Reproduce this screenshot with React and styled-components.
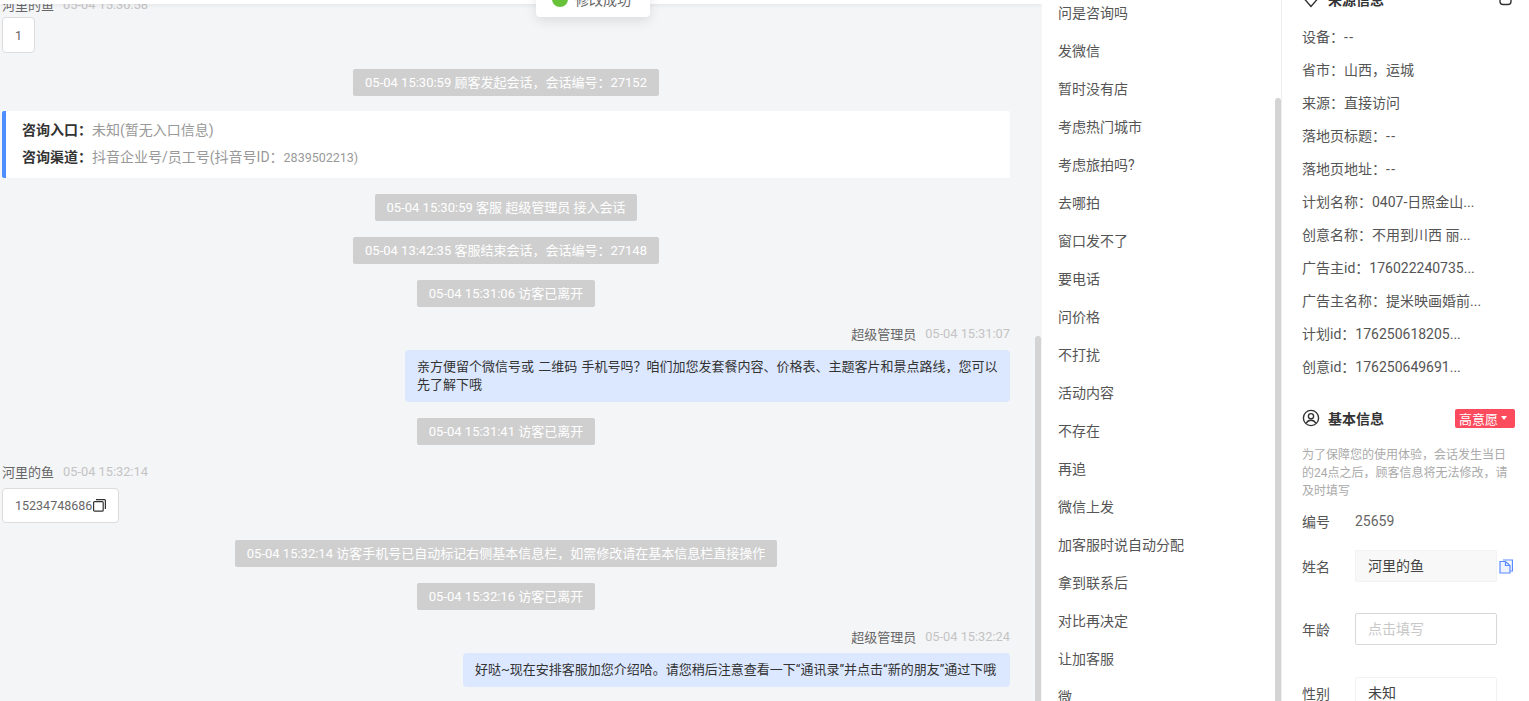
import React from 'react'
import styled, { createGlobalStyle } from 'styled-components'

const GlobalStyle = createGlobalStyle`
  html, body {
    margin: 0;
    height: 100%;
    overflow: hidden;
    background: #fff;
    font-family: Roboto, "Noto Sans CJK SC", sans-serif;
  }
  * { box-sizing: border-box; }
`

const Page = styled.div`
  display: flex;
  width: 1529px;
  height: 701px;
  overflow: hidden;
  position: relative;
`
const ChatColumn = styled.div`
  position: relative;
  width: 1042px;
  height: 701px;
  background: #f4f5f7;
  overflow: hidden;
`
const TopStrip = styled.div`
  height: 4px;
  background: #fff;
  box-shadow: 0 1px 4px rgba(0, 0, 0, 0.08);
  position: relative;
  z-index: 2;
`
const Messages = styled.div`
  display: flex;
  flex-direction: column;
  width: 1008px;
  margin-left: 2px;
  margin-top: -10px;
`
const Toast = styled.div`
  position: absolute;
  top: -19px;
  left: 536px;
  width: 114px;
  height: 36px;
  z-index: 3;
  display: flex;
  align-items: center;
  gap: 7px;
  padding-left: 16px;
  background: #fff;
  border-radius: 4px;
  box-shadow: 0 4px 12px rgba(0, 0, 0, 0.1);
  font-size: 14px;
  color: #666;
`
const ToastDot = styled.span`
  width: 16px;
  height: 16px;
  flex: none;
  border-radius: 50%;
  background: #67c23a;
`
const Sender = styled.div`
  display: flex;
  align-items: center;
  justify-content: ${(p) => (p.$right ? 'flex-end' : 'flex-start')};
  height: 20px;
  margin-top: ${(p) => p.$top || 0}px;
  font-size: 13px;
  color: #666;
`
const Time = styled.span`
  margin-left: 9px;
  color: #c4c4c4;
  font-size: 12.8px;
`
const VisitorBubble = styled.div`
  display: inline-flex;
  align-self: flex-start;
  align-items: center;
  height: ${(p) => p.$height || 36}px;
  margin-top: ${(p) => p.$top || 0}px;
  padding: 0 12px;
  background: #fff;
  border: 1px solid #dcdcdc;
  border-radius: 4px;
  font-size: 12.5px;
  color: #666;
`
const SystemNote = styled.div`
  align-self: center;
  height: 27px;
  line-height: 27px;
  margin-top: ${(p) => p.$top || 16}px;
  padding: 0 12px;
  background: #cfcfcf;
  border-radius: 2px;
  color: #fff;
  font-size: 13px;
  white-space: nowrap;
`
const EntryCard = styled.div`
  margin-top: 15px;
  height: 67px;
  padding: 6px 0 0 16px;
  background: #fff;
  border-left: 4px solid #4e8dfd;
  border-radius: 2px;
`
const EntryRow = styled.div`
  height: 27px;
  line-height: 27px;
  font-size: 14px;
  color: #999;
  white-space: nowrap;
  b {
    color: #333;
    font-weight: 700;
  }
`
const EntryNumber = styled.span`
  font-size: 12.5px;
`
const AgentBubble = styled.div`
  align-self: flex-end;
  width: ${(p) => p.$width}px;
  margin-top: 7px;
  padding: 8px 12px;
  background: #dce8ff;
  border-radius: 4px;
  color: #333;
  font-size: 13px;
  line-height: 18px;
  word-spacing: 1px;
`
const ChatScrollThumb = styled.div`
  position: absolute;
  right: 1px;
  top: 336px;
  bottom: 0;
  width: 6px;
  background: #d4d4d4;
  border-radius: 3px 3px 0 0;
`
const ReplyColumn = styled.div`
  position: relative;
  width: 240px;
  height: 701px;
  background: #fff;
  overflow: hidden;
  border-right: 1px solid #eee;
`
const ReplyItem = styled.div`
  height: 38px;
  line-height: 38px;
  padding-left: 16px;
  font-size: 14px;
  color: #555;
  white-space: nowrap;
`
const ReplyList = styled.div`
  margin-top: -6px;
`
const ReplyScrollThumb = styled.div`
  position: absolute;
  right: 0;
  top: 98px;
  bottom: 0;
  width: 6px;
  background: #d4d4d4;
  border-radius: 3px 3px 0 0;
`
const InfoColumn = styled.div`
  flex: 1;
  height: 701px;
  overflow: hidden;
  padding: 0 14px 0 20px;
  background: #fff;
`
const SectionHead = styled.div`
  display: flex;
  align-items: center;
  gap: 8px;
  height: 20px;
  font-size: 14px;
  font-weight: 700;
  color: #333;
  margin-top: ${(p) => p.$top || 0}px;
`
const SectionIcon = styled.svg`
  width: 18px;
  height: 18px;
  flex: none;
`
const HeadRight = styled.div`
  margin-left: auto;
  display: flex;
  align-items: center;
`
const SourceList = styled.div`
  margin-top: 12px;
`
const SourceRow = styled.div`
  height: 33px;
  line-height: 33px;
  font-size: 14px;
  color: #555;
  white-space: nowrap;
`
const Dash = styled.span`
  letter-spacing: 1.5px;
`
const IntentTag = styled.div`
  display: flex;
  align-items: center;
  gap: 3px;
  width: 60px;
  height: 19px;
  padding-left: 4px;
  background: #fb4b5c;
  border-radius: 2px;
  color: #fff;
  font-size: 13px;
  font-weight: 400;
`
const Caret = styled.span`
  width: 0;
  height: 0;
  border-left: 3.5px solid transparent;
  border-right: 3.5px solid transparent;
  border-top: 4px solid #fff;
`
const Notice = styled.div`
  margin-top: 18px;
  font-size: 12px;
  line-height: 18px;
  color: #aaa;
`
const FieldRow = styled.div`
  display: flex;
  align-items: center;
  height: ${(p) => p.$height || 32}px;
  margin-top: ${(p) => p.$top || 0}px;
`
const FieldLabel = styled.div`
  width: 53px;
  flex: none;
  font-size: 14px;
  color: #555;
`
const FieldValue = styled.div`
  font-size: 14px;
  color: #666;
`
const FieldBox = styled.div`
  width: 142px;
  height: 32px;
  line-height: 30px;
  padding-left: 12px;
  flex: none;
  font-size: 14px;
  color: ${(p) => (p.$placeholder ? '#c8c8c8' : '#444')};
  background: ${(p) => (p.$filled ? '#f8f8f8' : '#fff')};
  border: 1px solid ${(p) => (p.$filled ? '#f2f2f2' : p.$soft ? '#f2f2f2' : '#d8d8d8')};
  border-radius: 2px;
`
const CopyIcon = styled.svg`
  width: 14px;
  height: 15px;
  margin-left: 2px;
  flex: none;
`
const InlineCopy = styled.svg`
  width: 13px;
  height: 13px;
  flex: none;
  margin-left: 1px;
`

const replies = ['问是咨询吗', '发微信', '暂时没有店', '考虑热门城市', '考虑旅拍吗?', '去哪拍', '窗口发不了', '要电话', '问价格', '不打扰', '活动内容', '不存在', '再追', '微信上发', '加客服时说自动分配', '拿到联系后', '对比再决定', '让加客服', '微']

const sources = [
  '设备\uFF1A--',
  '省市\uFF1A山西\uFF0C运城',
  '来源\uFF1A直接访问',
  '落地页标题\uFF1A--',
  '落地页地址\uFF1A--',
  '计划名称\uFF1A0407-日照金山...',
  '创意名称\uFF1A不用到川西 丽...',
  '广告主id\uFF1A176022240735...',
  '广告主名称\uFF1A提米映画婚前...',
  '计划id\uFF1A176250618205...',
  '创意id\uFF1A176250649691...',
]

const App = () => {
  return (
    <Page>
      <GlobalStyle />
      <ChatColumn>
        <TopStrip />
        <Toast>
          <ToastDot />
          修改成功
        </Toast>
        <Messages>
          <Sender>河里的鱼<Time>05-04 15:30:58</Time></Sender>
          <VisitorBubble $height={36} $top={3}>1</VisitorBubble>
          <SystemNote>05-04 15:30:59 顾客发起会话&#xFF0C;会话编号&#xFF1A;27152</SystemNote>
          <EntryCard>
            <EntryRow><b>咨询入口&#xFF1A;</b>未知(暂无入口信息)</EntryRow>
            <EntryRow><b>咨询渠道&#xFF1A;</b>抖音企业号/员工号(抖音号ID&#xFF1A;<EntryNumber>2839502213)</EntryNumber></EntryRow>
          </EntryCard>
          <SystemNote>05-04 15:30:59 客服 超级管理员 接入会话</SystemNote>
          <SystemNote>05-04 13:42:35 客服结束会话&#xFF0C;会话编号&#xFF1A;27148</SystemNote>
          <SystemNote>05-04 15:31:06 访客已离开</SystemNote>
          <Sender $right $top={16}>超级管理员<Time>05-04 15:31:07</Time></Sender>
          <AgentBubble $width={605}>亲方便留个微信号或 二维码 手机号吗&#xFF1F;咱们加您发套餐内容、价格表、主题客片和景点路线&#xFF0C;您可以先了解下哦</AgentBubble>
          <SystemNote>05-04 15:31:41 访客已离开</SystemNote>
          <Sender $top={16}>河里的鱼<Time>05-04 15:32:14</Time></Sender>
          <VisitorBubble $height={35} $top={7}>
            15234748686
            <InlineCopy viewBox="0 0 13 13" fill="none" stroke="#333" strokeWidth="1.2">
              <rect x="0.6" y="2.6" width="9.6" height="9.6" rx="1" />
              <path d="M3 .6h8.4a1 1 0 0 1 1 1V10" />
            </InlineCopy>
          </VisitorBubble>
          <SystemNote $top={17}>05-04 15:32:14 访客手机号已自动标记右侧基本信息栏&#xFF0C;如需修改请在基本信息栏直接操作</SystemNote>
          <SystemNote>05-04 15:32:16 访客已离开</SystemNote>
          <Sender $right $top={16}>超级管理员<Time>05-04 15:32:24</Time></Sender>
          <AgentBubble $width={547}>好哒~现在安排客服加您介绍哈。请您稍后注意查看一下“通讯录”并点击“新的朋友”通过下哦</AgentBubble>
        </Messages>
        <ChatScrollThumb />
      </ChatColumn>
      <ReplyColumn>
        <ReplyList>
          {replies.map((r) => <ReplyItem key={r}>{r}</ReplyItem>)}
        </ReplyList>
        <ReplyScrollThumb />
      </ReplyColumn>
      <InfoColumn>
        <SectionHead $top={-11}>
          <SectionIcon viewBox="0 0 18 18" fill="none" stroke="#333" strokeWidth="1.4">
            <path d="M9 16.500 2.500 9a3.800 3.800 0 0 1 6.500-4.500A3.800 3.800 0 0 1 15.500 9z" />
          </SectionIcon>
          来源信息
          <HeadRight>
            <SectionIcon viewBox="0 0 18 18" fill="none" stroke="#333" strokeWidth="1.4">
              <rect x="3" y="3" width="11" height="11.500" rx="3" />
            </SectionIcon>
          </HeadRight>
        </SectionHead>
        <SourceList>
          {sources.map((s) => (
            <SourceRow key={s}>
              {s.endsWith('--') ? <>{s.slice(0, -2)}<Dash>--</Dash></> : s}
            </SourceRow>
          ))}
        </SourceList>
        <SectionHead $top={24}>
          <SectionIcon viewBox="0 0 18 18" fill="none" stroke="#333" strokeWidth="1.4">
            <circle cx="9" cy="9" r="7.6" />
            <circle cx="9" cy="7.2" r="2.6" />
            <path d="M4.2 14.2c1-2 2.800-3 4.800-3s3.800 1 4.800 3" />
          </SectionIcon>
          基本信息
          <HeadRight>
            <IntentTag>高意愿<Caret /></IntentTag>
          </HeadRight>
        </SectionHead>
        <Notice>为了保障您的使用体验&#xFF0C;会话发生当日的24点之后&#xFF0C;顾客信息将无法修改&#xFF0C;请及时填写</Notice>
        <FieldRow $height={20} $top={11}>
          <FieldLabel>编号</FieldLabel>
          <FieldValue>25659</FieldValue>
        </FieldRow>
        <FieldRow $top={19}>
          <FieldLabel>姓名</FieldLabel>
          <FieldBox $filled>河里的鱼</FieldBox>
          <CopyIcon viewBox="0 0 14 15" fill="#eef3ff" stroke="#5b8cff" strokeWidth="1.2">
            <path d="M4 1h6l3.400 0v11h-2" fill="none" />
            <path d="M1 2.500h5.500l4.500 4v7.500h-10z" />
            <path d="M6.500 2.500v4h4.500" fill="none" />
          </CopyIcon>
        </FieldRow>
        <FieldRow $top={31}>
          <FieldLabel>年龄</FieldLabel>
          <FieldBox $placeholder>点击填写</FieldBox>
        </FieldRow>
        <FieldRow $top={32}>
          <FieldLabel>性别</FieldLabel>
          <FieldBox $soft>未知</FieldBox>
        </FieldRow>
      </InfoColumn>
    </Page>
  )
}

export default App
